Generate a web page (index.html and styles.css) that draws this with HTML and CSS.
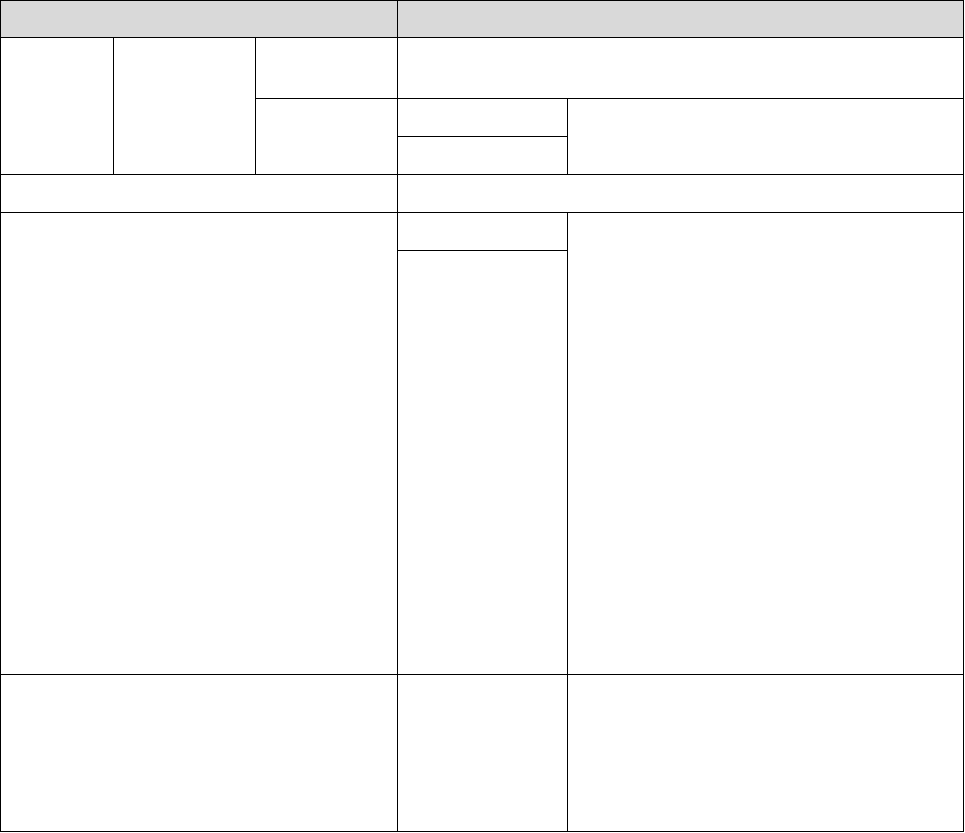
FILE: index.html
```html
<html>
    <head>
        <title>Table layout</title>
        <meta charset="UTF-8" />
        <link rel="stylesheet" href="styles.css">
    </head>
    <body>
        <div class="sheet">
            <div class="cell head head-left"></div>
            <div class="cell head head-right"></div>

            <div class="cell a1"></div>
            <div class="cell a2"></div>
            <div class="cell a3"></div>
            <div class="cell a45"></div>
            <div class="cell b3"></div>
            <div class="cell b4"></div>
            <div class="cell b5"></div>
            <div class="cell c4"></div>

            <div class="cell d13"></div>
            <div class="cell d45"></div>

            <div class="cell e13"></div>
            <div class="cell e4"></div>
            <div class="cell e5"></div>
            <div class="cell f4"></div>

            <div class="cell g13"></div>
            <div class="cell g4"></div>
            <div class="cell g5"></div>
        </div>
    </body>
</html>
```

FILE: styles.css
```css
body {
    margin: 0;
    background: #fff;
    font-family: "Liberation Sans", Arial, sans-serif;
}

/* black background shows through the 1px gaps as grid lines */
.sheet {
    display: grid;
    width: 964px;
    box-sizing: border-box;
    padding: 1px;
    gap: 1px;
    background: #000;
    grid-template-columns: 112px 141px 141px 169px 395px;
    grid-template-rows: 36px 60px 37px 37px 37px 37px 423px 156px;
}

.cell {
    background: #fff;
}

.head {
    background: #d9d9d9;
}
.head-left { grid-column: 1 / 4; grid-row: 1; }
.head-right { grid-column: 4 / 6; grid-row: 1; }

.a1 { grid-column: 1; grid-row: 2 / 5; }
.a2 { grid-column: 2; grid-row: 2 / 5; }
.a3 { grid-column: 3; grid-row: 2; }
.a45 { grid-column: 4 / 6; grid-row: 2; }
.b3 { grid-column: 3; grid-row: 3 / 5; }
.b4 { grid-column: 4; grid-row: 3; }
.b5 { grid-column: 5; grid-row: 3 / 5; }
.c4 { grid-column: 4; grid-row: 4; }

.d13 { grid-column: 1 / 4; grid-row: 5; }
.d45 { grid-column: 4 / 6; grid-row: 5; }

.e13 { grid-column: 1 / 4; grid-row: 6 / 8; }
.e4 { grid-column: 4; grid-row: 6; }
.e5 { grid-column: 5; grid-row: 6 / 8; }
.f4 { grid-column: 4; grid-row: 7; }

.g13 { grid-column: 1 / 4; grid-row: 8; }
.g4 { grid-column: 4; grid-row: 8; }
.g5 { grid-column: 5; grid-row: 8; }
```
